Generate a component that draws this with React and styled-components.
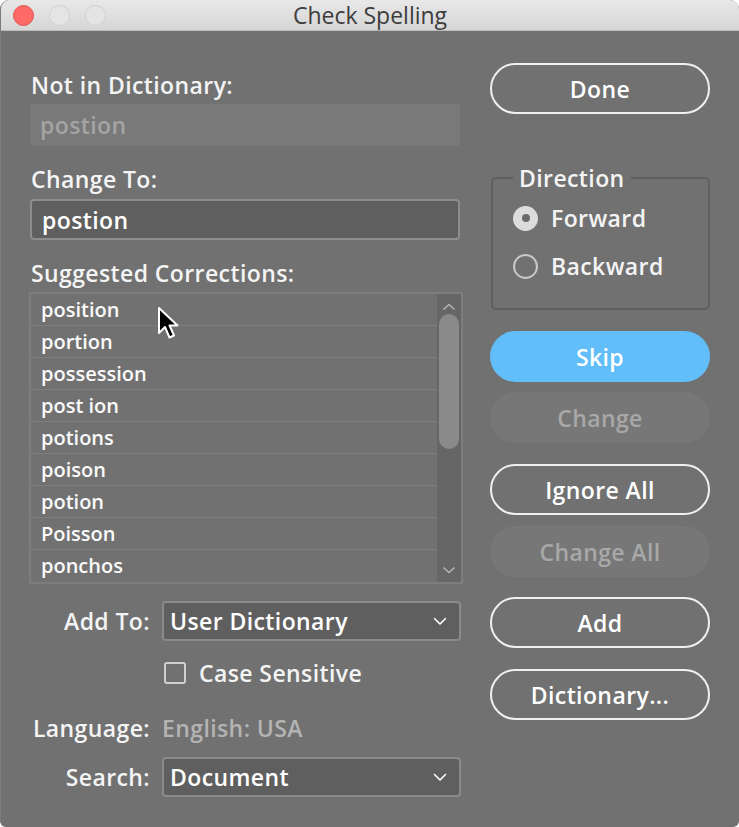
import React from 'react';
import styled, { createGlobalStyle, css } from 'styled-components';

const GlobalStyle = createGlobalStyle`
  html, body {
    margin: 0;
    padding: 0;
    background: #ffffff;
  }
  body {
    font-family: "Open Sans", "Noto Sans", sans-serif;
  }
`;

const Window = styled.div`
  width: 739px;
  height: 827px;
  display: flex;
  flex-direction: column;
  background: #717171;
  border-radius: 9px 9px 6px 6px;
  overflow: hidden;
  box-sizing: border-box;
  border-left: 1px solid #7c7c7c;
`;

const TitleBar = styled.div`
  height: 31px;
  flex: 0 0 31px;
  display: flex;
  align-items: center;
  position: relative;
  background: linear-gradient(#e8e8e8, #d6d6d6);
  border-bottom: 1px solid #bdbdbd;
  box-sizing: border-box;
  padding-left: 12px;
  gap: 15px;
`;

const Light = styled.span`
  width: 21px;
  height: 21px;
  border-radius: 50%;
  box-sizing: border-box;
  background: #e4e4e4;
  border: 1px solid #d0d0d0;
  ${props => props.red && css`
    background: #fe6b67;
    border-color: #e2504d;
  `}
`;

const Title = styled.div`
  position: absolute;
  left: 0;
  right: 0;
  top: 0;
  bottom: 0;
  display: flex;
  align-items: center;
  justify-content: center;
  font-size: 23px;
  color: #3d3d3d;
  pointer-events: none;
`;

const Body = styled.div`
  flex: 1;
  display: grid;
  grid-template-columns: 430px 220px;
  column-gap: 30px;
  padding: 32px 0 0 29px;
  color: #f4f4f4;
  font-size: 23px;
  font-weight: 600;
  letter-spacing: 0.4px;
`;

const LeftColumn = styled.div`
  display: flex;
  flex-direction: column;
  padding-top: 10px;
`;

const Label = styled.div`
  height: 24px;
  line-height: 24px;
  margin-top: ${props => props.top || 0}px;
  margin-bottom: ${props => props.bottom || 7}px;
  padding-left: 1px;
`;

const Field = styled.div`
  height: ${props => props.h || 42}px;
  box-sizing: border-box;
  display: flex;
  align-items: center;
  padding-left: 10px;
  border-radius: 4px;
  ${props => props.disabled ? css`
    background: #797979;
    color: #a4a4a4;
  ` : css`
    background: #5f5f5f;
    border: 2px solid #8d8d8d;
    color: #ffffff;
  `}
`;

const ListBox = styled.div`
  position: relative;
  height: 292px;
  margin-left: -1px;
  width: 434px;
  box-sizing: border-box;
  border: 2px solid #7d7d7d;
  display: flex;
`;

const Rows = styled.div`
  flex: 1;
  display: flex;
  flex-direction: column;
`;

const Row = styled.div`
  height: 32px;
  box-sizing: border-box;
  line-height: 31px;
  padding-left: 10px;
  font-size: 20px;
  letter-spacing: 0;
  color: #fafafa;
  border-bottom: 1px solid #7e7e7e;
  &:last-child {
    border-bottom: none;
  }
`;

const ScrollBar = styled.div`
  width: 24px;
  background: #666666;
  display: flex;
  flex-direction: column;
  align-items: center;
`;

const Thumb = styled.div`
  width: 20px;
  height: 135px;
  margin-top: 3px;
  border-radius: 10px;
  background: #8a8a8a;
`;

const Arrow = styled.svg`
  display: block;
  margin: ${props => props.m};
`;

const Cursor = styled.svg`
  position: absolute;
  left: 126px;
  top: 12px;
`;

const FormRow = styled.div`
  display: grid;
  grid-template-columns: 120px 299px;
  column-gap: 12px;
  align-items: center;
  height: ${props => props.h}px;
  margin-top: ${props => props.top}px;
`;

const RowLabel = styled.div`
  text-align: right;
`;

const Select = styled.div`
  height: 40px;
  box-sizing: border-box;
  background: #5f5f5f;
  border: 2px solid #8a8a8a;
  border-radius: 4px;
  display: flex;
  align-items: center;
  justify-content: space-between;
  padding: 0 12px 0 6px;
  color: #ffffff;
`;

const Check = styled.span`
  width: 22px;
  height: 22px;
  box-sizing: border-box;
  border: 2px solid #cfcfcf;
  border-radius: 3px;
`;

const CheckLabel = styled.label`
  display: flex;
  align-items: center;
  gap: 13px;
  padding-left: 2px;
`;

const Muted = styled.div`
  color: #b4b4b4;
`;

const RightColumn = styled.div`
  display: flex;
  flex-direction: column;
`;

const Button = styled.div`
  height: 51px;
  box-sizing: border-box;
  border-radius: 26px;
  display: flex;
  align-items: center;
  justify-content: center;
  margin-top: ${props => props.top || 0}px;
  ${props => props.variant === 'primary' && css`
    background: #62bef8;
    color: #ffffff;
  `}
  ${props => props.variant === 'disabled' && css`
    background: #777777;
    color: #a8a8a8;
  `}
  ${props => props.variant === 'outline' && css`
    border: 2px solid #f0f0f0;
    color: #ffffff;
  `}
`;

const Group = styled.fieldset`
  margin: 52px 0 0 1px;
  padding: 4px 0 18px 20px;
  border: 2px solid #5f5f5f;
  border-radius: 5px;
  height: 144px;
  box-sizing: border-box;
  display: flex;
  flex-direction: column;
`;

const Legend = styled.legend`
  padding: 0 6px;
  margin-left: 0;
  line-height: 24px;
`;

const Radio = styled.div`
  display: flex;
  align-items: center;
  gap: 13px;
  height: 48px;
`;

const RadioDot = styled.span`
  width: 25px;
  height: 25px;
  box-sizing: border-box;
  border-radius: 50%;
  display: flex;
  align-items: center;
  justify-content: center;
  ${props => props.checked ? css`
    background: #dcdcdc;
    &::after {
      content: '';
      width: 8px;
      height: 8px;
      border-radius: 50%;
      background: #6a6a6a;
    }
  ` : css`
    border: 2px solid #c8c8c8;
  `}
`;

const Chevron = () => (
  <svg width="14" height="9" viewBox="0 0 14 9">
    <path d="M1.5 1.5 L7 7 L12.5 1.5" fill="none" stroke="#ffffff" strokeWidth="1.6" strokeLinecap="round" strokeLinejoin="round" />
  </svg>
);

const suggestions = ['position', 'portion', 'possession', 'post ion', 'potions', 'poison', 'potion', 'Poisson', 'ponchos'];

const rightButtons = [
  { label: 'Skip', variant: 'primary', top: 21 },
  { label: 'Change', variant: 'disabled', top: 10 },
  { label: 'Ignore All', variant: 'outline', top: 21 },
  { label: 'Change All', variant: 'disabled', top: 11 },
  { label: 'Add', variant: 'outline', top: 20 },
  { label: 'Dictionary...', variant: 'outline', top: 21 },
];

function App() {
  return (
    <>
      <GlobalStyle />
      <Window>
        <TitleBar>
          <Light red />
          <Light />
          <Light />
          <Title>Check Spelling</Title>
        </TitleBar>
        <Body>
          <LeftColumn>
            <Label>Not in Dictionary:</Label>
            <Field disabled>postion</Field>
            <Label top={21} bottom={8}>Change To:</Label>
            <Field h={41}>postion</Field>
            <Label top={21}>Suggested Corrections:</Label>
            <ListBox>
              <Rows>
                {suggestions.map(word => <Row key={word}>{word}</Row>)}
              </Rows>
              <ScrollBar>
                <Arrow m="9px 0 0" width="14" height="8" viewBox="0 0 14 8">
                  <path d="M1.5 6.5 L7 1.5 L12.5 6.5" fill="none" stroke="#b4b4b4" strokeWidth="1.5" />
                </Arrow>
                <Thumb />
                <Arrow m="auto 0 8px" width="14" height="8" viewBox="0 0 14 8">
                  <path d="M1.5 1.5 L7 6.5 L12.5 1.5" fill="none" stroke="#b4b4b4" strokeWidth="1.5" />
                </Arrow>
              </ScrollBar>
              <Cursor width="24" height="36" viewBox="0 0 24 36">
                <path d="M2 2 L2 27 L8 21 L12.5 31.5 L17 29.5 L12.5 19.5 L20.5 19.5 Z" fill="#000000" stroke="#ffffff" strokeWidth="2" strokeLinejoin="round" />
              </Cursor>
            </ListBox>
            <FormRow h={40} top={17}>
              <RowLabel>Add To:</RowLabel>
              <Select>User Dictionary<Chevron /></Select>
            </FormRow>
            <FormRow h={30} top={16}>
              <span />
              <CheckLabel><Check />Case Sensitive</CheckLabel>
            </FormRow>
            <FormRow h={28} top={25}>
              <RowLabel>Language:</RowLabel>
              <Muted>English: USA</Muted>
            </FormRow>
            <FormRow h={40} top={17}>
              <RowLabel>Search:</RowLabel>
              <Select>Document<Chevron /></Select>
            </FormRow>
          </LeftColumn>
          <RightColumn>
            <Button variant="outline">Done</Button>
            <Group>
              <Legend>Direction</Legend>
              <Radio><RadioDot checked />Forward</Radio>
              <Radio><RadioDot />Backward</Radio>
            </Group>
            {rightButtons.map(b => (
              <Button key={b.label} variant={b.variant} top={b.top}>{b.label}</Button>
            ))}
          </RightColumn>
        </Body>
      </Window>
    </>
  );
}

export default App;
